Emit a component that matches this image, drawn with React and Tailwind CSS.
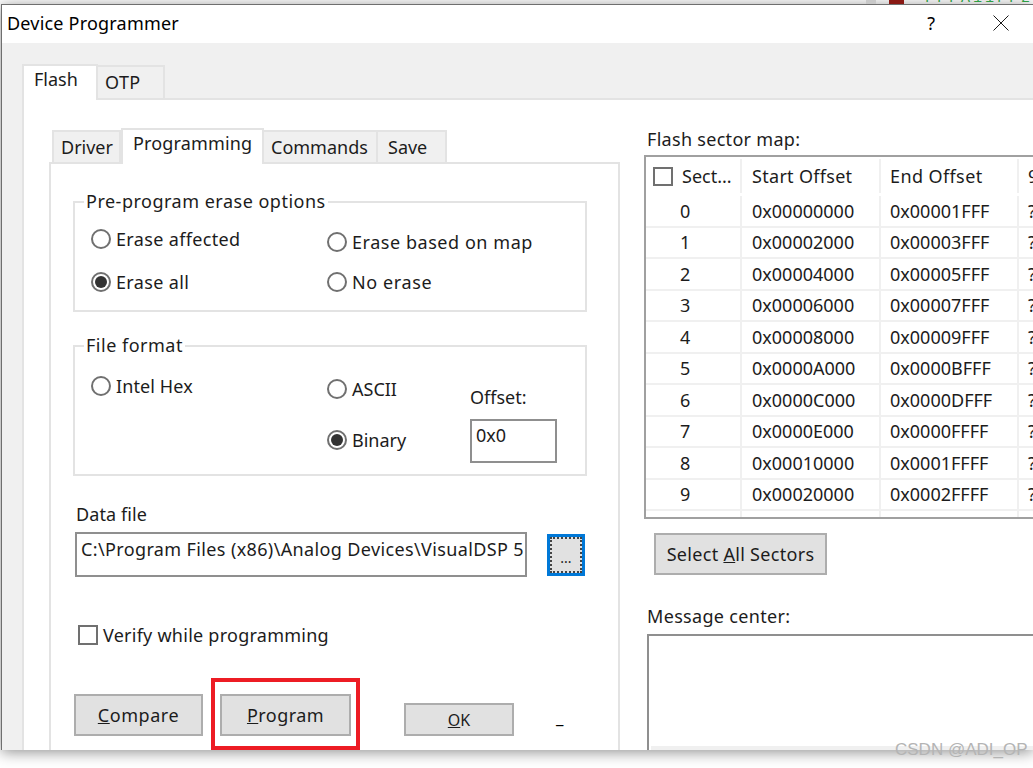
const sectors = [
  ['0', '0x00000000', '0x00001FFF'],
  ['1', '0x00002000', '0x00003FFF'],
  ['2', '0x00004000', '0x00005FFF'],
  ['3', '0x00006000', '0x00007FFF'],
  ['4', '0x00008000', '0x00009FFF'],
  ['5', '0x0000A000', '0x0000BFFF'],
  ['6', '0x0000C000', '0x0000DFFF'],
  ['7', '0x0000E000', '0x0000FFFF'],
  ['8', '0x00010000', '0x0001FFFF'],
  ['9', '0x00020000', '0x0002FFFF'],
]

function Radio({ label, checked, className }) {
  return (
    <div className={`flex items-center h-6 gap-[5px] ${className}`}>
      <span className="w-5 h-5 rounded-full border-2 border-[#707070] bg-white flex items-center justify-center shrink-0">
        {checked && <span className="w-3 h-3 rounded-full bg-[#333333]" />}
      </span>
      <span>{label}</span>
    </div>
  )
}

function Check({ className }) {
  return <span className={`block w-5 h-5 border-2 border-[#707070] bg-white shrink-0 ${className}`} />
}

function Button({ className, children }) {
  return (
    <button className={`flex items-center justify-center bg-[#e1e1e1] border-2 border-[#adadad] ${className}`}>
      {children}
    </button>
  )
}

function Group({ title, className, children }) {
  return (
    <div className={`relative w-[514px] border-2 border-[#e3e3e3] pl-[16px] flex ${className}`}>
      <span className="absolute -top-[12px] left-[9px] bg-white px-[2px] leading-[20px] tracking-[0.5px]">{title}</span>
      {children}
    </div>
  )
}

export default function App() {
  return (
    <div className="relative w-[1033px] h-[768px] bg-white overflow-hidden text-[18px] leading-6 text-[#1c1c1c] font-['Noto_Sans',sans-serif]">
      {/* what shows of the desktop above the dialog */}
      <div className="h-[4px] overflow-hidden flex justify-end items-end">
        <span className="w-[10px] h-[4px] bg-[#c8c8c8] mr-[13px]" />
        <span className="w-[15px] h-[4px] bg-[#8a1a14] mr-[21px]" />
        <span className="text-[#2e9e44] text-[15px] leading-[15px] -mb-[2px] tracking-[3px] font-['Liberation_Mono',monospace]">FFFA11FF2</span>
      </div>

      {/* dialog */}
      <div className="h-[746px] ml-px bg-[#f0f0f0] border-t border-l border-[#6f6f6f] flex flex-col overflow-hidden shadow-[0_2px_14px_rgba(0,0,0,0.45)]">
        <div className="h-[38px] shrink-0 bg-white flex items-center pl-[5px] pr-[24px] pb-[2px]">
          <span className="text-black tracking-[0.2px]">Device Programmer</span>
          <span className="ml-auto text-black">?</span>
          <svg className="ml-[58px]" width="16" height="16" viewBox="0 0 16 16" fill="none" stroke="#1a1a1a" strokeWidth="1">
            <path d="M0.5 0.5L15.5 15.5M15.5 0.5L0.5 15.5" />
          </svg>
        </div>

        <div className="flex-1 flex flex-col pl-[20px] min-h-0">
          {/* outer tabs */}
          <div className="h-[57px] shrink-0 flex items-end relative z-10 -mb-[2px]">
            <div className="w-[76px] h-[36px] bg-white border-2 border-b-0 border-[#e3e3e3] pl-[10px] pt-[1px]">Flash</div>
            <div className="w-[67px] h-[33px] border-2 border-l-0 border-b-0 border-[#e3e3e3] pl-[7px] pt-[3px] mb-[2px] tracking-[0.4px]">OTP</div>
          </div>

          <div className="flex-1 min-h-0 bg-white border-l-2 border-t-2 border-[#e3e3e3] flex pl-[25px]">
            {/* left column */}
            <div className="w-[571px] shrink-0 flex flex-col">
              <div className="h-[36px] mt-[28px] shrink-0 flex items-end relative z-10 -mb-[2px] pl-[3px]">
                <div className="w-[69px] h-[32px] border-2 border-b-0 border-[#e3e3e3] bg-[#f0f0f0] pl-[7px] pt-[3px] mb-[2px]">Driver</div>
                <div className="w-[143px] h-[36px] border-2 border-b-0 border-[#e3e3e3] bg-white pl-[10px] pt-[1px] tracking-[0.15px]">Programming</div>
                <div className="w-[114px] h-[32px] border-2 border-l-0 border-b-0 border-[#e3e3e3] bg-[#f0f0f0] pl-[7px] pt-[3px] mb-[2px]">Commands</div>
                <div className="w-[69px] h-[32px] border-2 border-l-0 border-b-0 border-[#e3e3e3] bg-[#f0f0f0] pl-[10px] pt-[3px] mb-[2px]">Save</div>
              </div>

              <div className="flex-1 min-h-0 relative border-2 border-b-0 border-[#e3e3e3] pl-[22px]">
                <Group title="Pre-program erase options" className="h-[111px] mt-[37px]">
                  <div className="w-[236px]">
                    <Radio label="Erase affected" className="mt-[24px] tracking-[0.35px]" />
                    <Radio label="Erase all" checked className="mt-[19px] tracking-[0.35px]" />
                  </div>
                  <div>
                    <Radio label="Erase based on map" className="mt-[27px] tracking-[0.55px]" />
                    <Radio label="No erase" className="mt-[16px] tracking-[0.6px]" />
                  </div>
                </Group>

                <Group title="File format" className="h-[131px] mt-[33px]">
                  <div className="w-[236px]">
                    <Radio label="Intel Hex" className="mt-[27px] tracking-[0.1px]" />
                  </div>
                  <div className="w-[143px]">
                    <Radio label="ASCII" className="mt-[30px]" />
                    <Radio label="Binary" checked className="mt-[27px]" />
                  </div>
                  <div>
                    <div className="mt-[38px]">Offset:</div>
                    <div className="w-[87px] h-[44px] mt-[10px] border-2 border-[#8f8f8f] pl-[4px] pt-[2px]">0x0</div>
                  </div>
                </Group>

                <div className="mt-[26px] ml-[3px] tracking-[0.1px]">Data file</div>
                <div className="flex items-center mt-[6px] ml-[2px]">
                  <div className="w-[452px] h-[45px] border-2 border-[#8f8f8f] pl-[4px] pt-[3px] whitespace-nowrap overflow-hidden tracking-[0.37px]">C:\Program Files (x86)\Analog Devices\VisualDSP 5</div>
                  <div className="w-[38px] h-[42px] ml-[20px] border-[3px] border-[#0078d7] bg-[#e1e1e1]">
                    <div className="w-full h-full border-2 border-dotted border-[#444444] flex items-center justify-center text-[14px] leading-none pt-[6px]">...</div>
                  </div>
                </div>

                <div className="flex items-center gap-[5px] mt-[46px] ml-[5px]">
                  <Check />
                  <span className="tracking-[0.25px]">Verify while programming</span>
                </div>

                <div className="flex items-end mt-[47px] ml-px">
                  <Button className="w-[129px] h-[42px]"><span className="tracking-[0.55px]"><u>C</u>ompare</span></Button>
                  <Button className="w-[131px] h-[42px] ml-[17px]"><span className="tracking-[0.45px]"><u>P</u>rogram</span></Button>
                  <Button className="w-[110px] h-[33px] ml-[53px] pt-px"><span className="text-[16px]"><u>O</u>K</span></Button>
                  <span className="ml-[42px] mb-[10px] leading-[20px] text-black font-bold">_</span>
                </div>

                {/* red highlight drawn over the Program button */}
                <div className="absolute left-[160px] top-[514px] w-[149px] h-[72px] border-4 border-[#ed1c24]" />
              </div>
            </div>

            {/* right column */}
            <div className="flex-1 min-w-0 flex flex-col">
              <div className="ml-[27px] mt-[27px] tracking-[0.3px]">Flash sector map:</div>
              <div className="ml-[24px] mt-[4px] h-[364px] border-2 border-r-0 border-[#a0a0a0] overflow-hidden">
                <div className="grid grid-cols-[96px_139px_138px_1fr] h-[36px] items-center mb-[3px] pt-[2px]">
                  <div className="flex items-center gap-[9px] pl-[7px] h-full border-r-2 border-[#f0f0f0]">
                    <Check className="!w-[20px] !h-[19px]" />
                    <span>Sect...</span>
                  </div>
                  <div className="pl-[10px] h-full flex items-center border-r-2 border-[#f0f0f0] tracking-[0.3px]">Start Offset</div>
                  <div className="pl-[9px] h-full flex items-center border-r-2 border-[#f0f0f0] tracking-[0.4px]">End Offset</div>
                  <div className="pl-[9px]">9</div>
                </div>
                {sectors.map((s) => (
                  <div key={s[0]} className="grid grid-cols-[96px_139px_138px_1fr] h-[31.5px] items-center border-b-2 border-[#f0f0f0]">
                    <div className="pl-[34px] h-full flex items-center border-r-2 border-[#f0f0f0]">{s[0]}</div>
                    <div className="pl-[10px] h-full flex items-center border-r-2 border-[#f0f0f0]">{s[1]}</div>
                    <div className="pl-[9px] h-full flex items-center border-r-2 border-[#f0f0f0]">{s[2]}</div>
                    <div className="pl-[9px]">?</div>
                  </div>
                ))}
                <div className="grid grid-cols-[96px_139px_138px_1fr] h-[6px]">
                  <div className="border-r-2 border-[#f0f0f0]" />
                  <div className="border-r-2 border-[#f0f0f0]" />
                  <div className="border-r-2 border-[#f0f0f0]" />
                </div>
              </div>

              <Button className="w-[173px] h-[42px] ml-[34px] mt-[14px]"><span className="tracking-[0.3px]">Select <u>A</u>ll Sectors</span></Button>

              <div className="ml-[27px] mt-[29px] tracking-[0.33px]">Message center:</div>
              <div className="ml-[27px] mt-[6px] flex-1 min-h-0 border-2 border-r-0 border-b-0 border-[#8f8f8f] flex flex-col justify-end pl-[2px]">
                <div className="h-[4px] bg-[#f0f0f0]" />
              </div>
            </div>
          </div>
        </div>
      </div>

      {/* watermark */}
      <span className="absolute left-[895px] top-[738px] text-[17px] leading-6 text-[#b4b4b4] font-['Liberation_Sans',sans-serif] whitespace-nowrap">CSDN @ADI_OP</span>
    </div>
  )
}
